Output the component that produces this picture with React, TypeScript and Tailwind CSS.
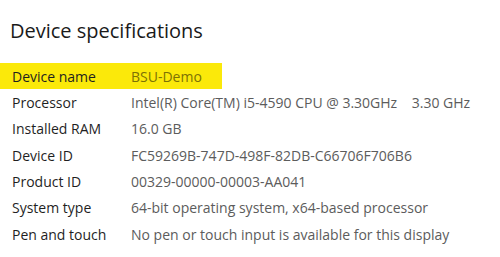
export default function App() {
  const specs = [
    { label: "Device name", value: "BSU-Demo", highlight: true },
    { label: "Processor", value: "Intel(R) Core(TM) i5-4590 CPU @ 3.30GHz\u00a0\u00a0\u00a0\u00a03.30 GHz" },
    { label: "Installed RAM", value: "16.0 GB" },
    { label: "Device ID", value: "FC59269B-747D-498F-82DB-C66706F706B6" },
    { label: "Product ID", value: "00329-00000-00003-AA041" },
    { label: "System type", value: "64-bit operating system, x64-based processor" },
    { label: "Pen and touch", value: "No pen or touch input is available for this display" },
  ]

  return (
    <div className="h-[257px] w-[500px] overflow-hidden bg-white" style={{ fontFamily: '"Open Sans", sans-serif' }}>
      <h1 className="pl-[10px] pt-[17px] text-[20px] leading-[28px] text-[#1a1a1a]">Device specifications</h1>
      <div className="mt-[18px] flex flex-col">
        {specs.map((s) => (
          <div
            key={s.label}
            className={`flex h-[26.33px] items-center text-[14px] ${s.highlight ? "w-[222px] bg-[#fbe90a]" : ""}`}
          >
            <span className="w-[131px] shrink-0 pl-[12px] text-[#1f1f1f]">{s.label}</span>
            <span className={`whitespace-nowrap ${s.highlight ? "text-[#7d7205]" : "text-[#5c5c5c]"}`}>{s.value}</span>
          </div>
        ))}
      </div>
    </div>
  )
}
